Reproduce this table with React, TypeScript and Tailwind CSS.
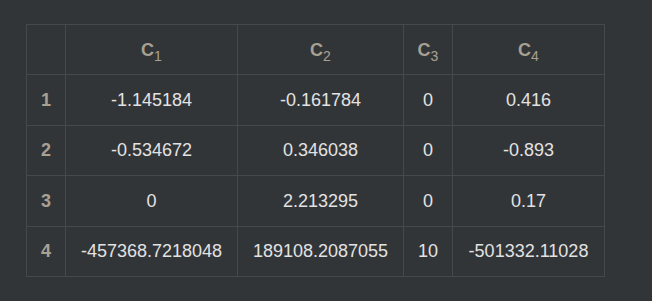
const headers = ['1', '2', '3', '4']

const rows: string[][] = [
  ['-1.145184', '-0.161784', '0', '0.416'],
  ['-0.534672', '0.346038', '0', '-0.893'],
  ['0', '2.213295', '0', '0.17'],
  ['-457368.7218048', '189108.2087055', '10', '-501332.11028'],
]

const rowHeights = ['h-[51px]', 'h-[50px]', 'h-[51px]', 'h-[50px]']

export default function App() {
  return (
    <div className="w-[652px] h-[301px] bg-[#323538] pt-[24px] pl-[26px] font-['Liberation_Sans',Arial,sans-serif] text-[18px]">
      <table className="table-fixed border-collapse w-[578px]">
        <colgroup>
          <col className="w-[39px]" />
          <col className="w-[172px]" />
          <col className="w-[166px]" />
          <col className="w-[49px]" />
          <col className="w-[152px]" />
        </colgroup>
        <thead>
          <tr className="h-[50px]">
            <th className="border border-[#46494c]" />
            {headers.map((h) => (
              <th key={h} className="border border-[#46494c] text-center font-bold text-[#a8a193] p-0 pt-[2px]">
                C
                <sub className="font-normal text-[14px] relative top-[5px]">{h}</sub>
              </th>
            ))}
          </tr>
        </thead>
        <tbody>
          {rows.map((r, i) => (
            <tr key={i} className={rowHeights[i]}>
              <td className="border border-[#46494c] text-center font-bold text-[#a8a193] p-0">{i + 1}</td>
              {r.map((v, j) => (
                <td key={j} className="border border-[#46494c] text-center text-[#e2e2e2] p-0">
                  {v}
                </td>
              ))}
            </tr>
          ))}
        </tbody>
      </table>
    </div>
  )
}
